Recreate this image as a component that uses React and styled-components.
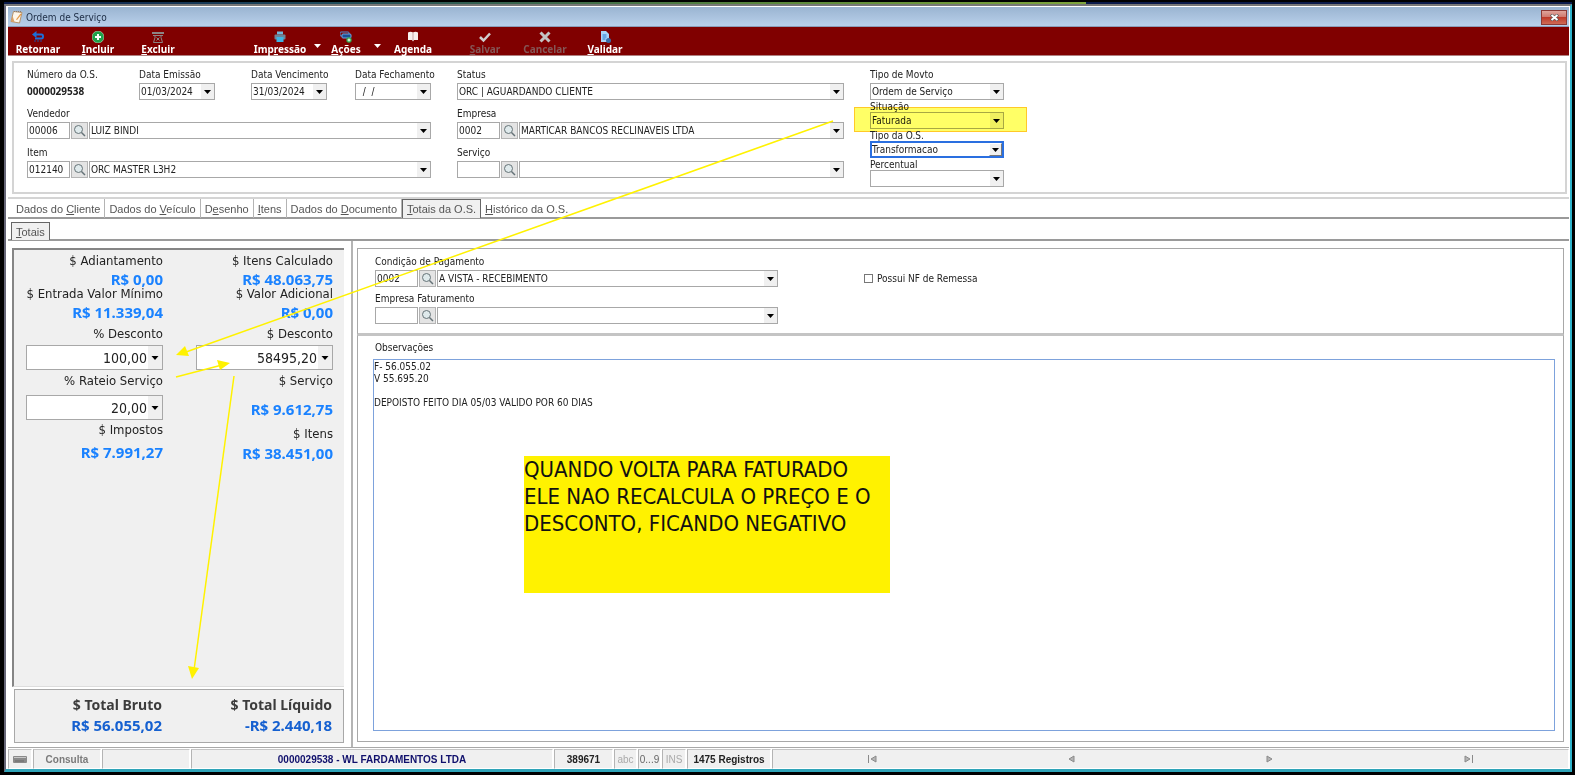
import { useState } from "react";
import styled, { createGlobalStyle, css } from "styled-components";

const UI_FONT = `"DejaVu Sans Condensed", "Noto Sans", sans-serif`;
const BOLD_FONT = `"Noto Sans", "Open Sans", sans-serif`;
const SYS_FONT = `"Liberation Sans", Arial, sans-serif`;

const GlobalStyle = createGlobalStyle`
  * {
    box-sizing: border-box;
  }
  body {
    margin: 0;
    background: #000;
    color: #222;
    font-family: ${UI_FONT};
    font-size: 10px;
  }
  button, input, select, textarea {
    font: inherit;
    color: inherit;
    margin: 0;
    border-radius: 0;
  }
`;

//Desktop and window frame
const Desktop = styled.div`
  position: relative;
  display: flex;
  flex-direction: column;
  min-height: 100vh;
  padding: 2px 3px 3px 4px;
  background: #000;
`;

const TopStrip = styled.div`
  height: 2px;
  background: linear-gradient(90deg, #0a1a4a 0%, #1d4a5c 20%, #5c8a3a 50%, #7fa63c 69%, #0a1a4a 69%, #0a1a4a 100%);
`;

const Window = styled.div`
  flex: 1;
  display: flex;
  flex-direction: column;
  background: #fff;
  border-style: solid;
  border-width: 2px 2px 3px 2px;
  border-color: #777 #2fb4cc #2fa4b8 #667;
  padding: 1px 1px 0 2px;
`;

const TitleBar = styled.header`
  display: flex;
  align-items: center;
  gap: 3px;
  height: 20px;
  padding: 1px 2px 0;
  background: linear-gradient(#9ab4d1, #b9d0ea);
  border-bottom: 1px solid #8c9cb8;
`;

const Title = styled.h1`
  flex: 1;
  margin: 0;
  font-size: 10px;
  font-weight: normal;
  color: #1c2c44;
`;

const CloseButton = styled.button`
  display: flex;
  align-items: center;
  justify-content: center;
  width: 26px;
  height: 15px;
  padding: 0;
  border: 1px solid #8c3a36;
  background: linear-gradient(#e0a59c 0%, #d07a70 45%, #bf3a2a 50%, #cf6a55 100%);
`;

//Red toolbar
const Toolbar = styled.nav`
  display: flex;
  height: 29px;
  background: #800000;
  border-bottom: 1px solid #b08080;
`;

const ToolButton = styled.button`
  display: flex;
  flex-direction: column;
  align-items: center;
  width: ${(p) => p.$width || 60}px;
  margin-left: ${(p) => p.$space || 0}px;
  padding: 4px 0 0;
  border: none;
  background: none;
  color: ${(p) => (p.disabled ? "#855656" : "#fff")};
  font-family: ${BOLD_FONT};
  font-weight: bold;
  font-size: 10px;
  line-height: 12px;

  svg {
    flex: none;
    display: block;
  }
`;

const ToolArrow = styled.button`
  display: flex;
  align-items: center;
  justify-content: center;
  width: ${(p) => p.$width}px;
  padding: 10px 0 0;
  border: none;
  background: none;
  color: #fff;
`;

//Form parts
const HeaderPanel = styled.section`
  display: grid;
  grid-template-columns: minmax(0, 404px) minmax(0, 387px) minmax(0, 134px);
  gap: 26px;
  align-items: start;
  margin: 5px 2px 3px 4px;
  padding: 4px 13px 5px;
  border: 2px solid #d4d4d4;
`;

const Column = styled.div`
  display: flex;
  flex-direction: column;
  gap: ${(p) => p.$gap || 0}px;
`;

const DateRow = styled.div`
  display: grid;
  grid-template-columns: 112px 112px 104px 76px;
`;

const Field = styled.div`
  position: relative;
  display: flex;
  flex-direction: column;
`;

const DateBox = styled(Field)`
  width: 76px;
`;

const Label = styled.label`
  padding-top: ${(p) => (p.$tight ? 2 : 0)}px;
  font-size: 10px;
  line-height: ${(p) => (p.$tight ? 10 : 16)}px;
  white-space: nowrap;
`;

const OrderNumber = styled.output`
  font-family: ${BOLD_FONT};
  font-size: 10px;
  font-weight: bold;
  line-height: 17px;
`;

const boxed = css`
  width: 100%;
  height: 17px;
  padding: 0 1px;
  border: 1px solid #a8a8a8;
  background: #fff;
  outline: none;
  font-size: 10px;
`;

const TextInput = styled.input`
  ${boxed}
`;

const ComboBox = styled.div`
  display: grid;
  width: 100%;
  min-width: 0;

  > * {
    grid-area: 1 / 1;
  }

  select, input {
    ${boxed}
    appearance: none;
    padding-right: 16px;
  }

  ${(p) =>
    p.$focused &&
    css`
      select {
        border: 2px solid #2a6fe0;
        padding-left: 0;
      }
    `}
`;

const ComboArrow = styled.span`
  display: flex;
  align-items: center;
  justify-content: center;
  justify-self: end;
  width: 13px;
  margin: ${(p) => (p.$raised ? 2 : 1)}px;
  background: #f0f0f0;
  color: #000;
  pointer-events: none;
  ${(p) =>
    p.$raised &&
    css`
      border: 1px solid;
      border-color: #fff #777 #777 #fff;
    `}
`;

const LookupRow = styled.div`
  display: grid;
  grid-template-columns: 43px 17px minmax(0, 1fr);
  column-gap: 1px;
`;

const SearchButton = styled.button`
  display: flex;
  align-items: center;
  justify-content: center;
  padding: 0;
  border: 1px solid #b4b4b4;
  background: #e4e4e4;
  color: #667378;
`;

const Highlight = styled.div`
  position: absolute;
  inset: -5px -23px -3px -16px;
  border: 1px solid #ffc928;
  background: #ffff66;
  mix-blend-mode: multiply;
  pointer-events: none;
`;

//Tabs
const TabBar = styled.div`
  display: flex;
  align-items: stretch;
  height: 22px;
  padding: ${(p) => (p.$sub ? "3px 0 0 3px" : 0)};
  border-top: ${(p) => (p.$sub ? "none" : "2px solid #d4d4d4")};
  border-bottom: 2px solid #9a9a9a;
`;

const Tab = styled.button`
  margin: 0;
  margin-bottom: -1px;
  padding: 0 4px;
  border: none;
  border-right: 1px solid #b4b4b4;
  background: none;
  color: #555;
  font-family: ${SYS_FONT};
  font-size: 11px;
  white-space: nowrap;

  &:first-child {
    padding-left: 8px;
  }
  &:last-child {
    border-right-color: transparent;
  }
  ${(p) =>
    p.$active &&
    css`
      &&,
      &&:last-child {
        padding-left: 4px;
        border: 1px solid #666;
        border-bottom: none;
        background: #f0f0f0;
      }
    `}
`;

//Main area
const Content = styled.main`
  flex: 1;
  display: flex;
`;

const LeftPane = styled.aside`
  display: flex;
  flex-direction: column;
  gap: 2px;
  width: 345px;
  padding: 7px 7px 4px 4px;
  border-right: 2px solid #b4b4b4;
`;

const ValuesPanel = styled.section`
  flex: 1;
  display: grid;
  grid-template-columns: 137px 137px;
  column-gap: 33px;
  padding: 4px 9px 0 12px;
  background: #f0f0f0;
  border: 2px solid #858585;
  border-right: none;
  border-bottom: 1px solid #ddd;
`;

const TotalsPanel = styled.section`
  display: grid;
  grid-template-columns: 137px 137px;
  column-gap: 33px;
  padding: 5px 11px 7px 10px;
  margin-left: 2px;
  background: #f0f0f0;
  border: 1px solid #a8a8a8;
`;

const Amount = styled.div`
  display: flex;
  flex-direction: column;
  align-items: stretch;
  gap: ${(p) => p.$gap || 4}px;
  margin-top: ${(p) => p.$space || 0}px;
  text-align: right;
  white-space: nowrap;
`;

const AmountLabel = styled.label`
  font-size: 13px;
  line-height: 14px;
  color: #222;
`;

const AmountValue = styled.output`
  font-family: ${BOLD_FONT};
  font-size: 15px;
  font-weight: bold;
  line-height: 16px;
  color: #1a82ff;
`;

const AmountBox = styled.div`
  display: flex;
  height: 25px;
  border: 1px solid #a8a8a8;
  background: #fff;

  input {
    flex: 1;
    min-width: 0;
    padding: 0 1px;
    border: none;
    outline: none;
    background: none;
    font-size: 14px;
    text-align: right;
  }
  button {
    display: flex;
    align-items: center;
    justify-content: center;
    width: 14px;
    padding: 0;
    border: none;
    background: #f0f0f0;
    color: #000;
  }
`;

const TotalItem = styled.div`
  display: flex;
  flex-direction: column;
  text-align: right;
`;

const TotalLabel = styled.span`
  font-family: ${BOLD_FONT};
  font-size: 14px;
  font-weight: bold;
  line-height: 20px;
  color: #3c3c3c;
`;

const TotalValue = styled.output`
  font-family: ${BOLD_FONT};
  font-size: 15px;
  font-weight: bold;
  line-height: 20px;
  color: #1560d0;
`;

const RightPane = styled.div`
  flex: 1;
  display: flex;
  flex-direction: column;
  padding: 7px 5px 5px 4px;
`;

const PaymentPanel = styled.section`
  display: grid;
  grid-template-columns: minmax(0, 403px) auto;
  justify-content: start;
  column-gap: 86px;
  align-items: start;
  padding: 5px 17px 9px;
  border: 1px solid #a8a8a8;
  border-bottom: 2px solid #c4c4c4;
`;

const CheckLabel = styled.label`
  display: flex;
  align-items: center;
  gap: 4px;
  margin-top: 16px;
  line-height: 17px;

  input {
    appearance: none;
    width: 9px;
    height: 9px;
    border: 1px solid #777;
    background: #fff;
  }
`;

const NotesPanel = styled.section`
  position: relative;
  flex: 1;
  display: flex;
  flex-direction: column;
  padding: 4px 8px 10px 15px;
  border: 1px solid #a8a8a8;
  border-top: 1px solid #c4c4c4;

  label {
    padding: 0 0 3px 2px;
  }
`;

const NotesArea = styled.textarea`
  flex: 1;
  display: block;
  width: 100%;
  padding: 1px 0;
  border: 1px solid #7da2dc;
  outline: none;
  resize: none;
  font-size: 10px;
  line-height: 12px;
`;

const StickyNote = styled.p`
  position: absolute;
  left: 166px;
  top: 120px;
  width: 366px;
  height: 137px;
  margin: 0;
  background: #fff200;
  color: #111;
  font-size: 22px;
  line-height: 27px;
`;

//Status bar
const StatusBar = styled.footer`
  display: grid;
  grid-template-columns: 24px 68px 88px 362px 59px 23px 23px 24px 84px 1fr;
  column-gap: 1px;
  height: 22px;
  padding-top: 1px;
  background: #fff;
  border-top: 1px solid #a8a8a8;
  font-family: ${SYS_FONT};
`;

const StatusCell = styled.div`
  display: flex;
  align-items: center;
  justify-content: center;
  border: 1px solid;
  border-color: #c4c4c4 #fff #fff #b4b4b4;
  background: #f0f0f0;
  color: ${(p) => p.$color || "#222"};
  font-size: 10px;
  font-weight: ${(p) => (p.$plain ? "normal" : "bold")};
  white-space: nowrap;
`;

const NavCell = styled(StatusCell)`
  justify-content: space-around;
`;

const NavButton = styled.button`
  display: flex;
  padding: 0;
  border: none;
  background: none;
  color: #8a8a8a;
`;

const Arrows = styled.svg`
  position: absolute;
  top: 0;
  left: 0;
  pointer-events: none;
`;

//Icons
const Caret = ({ size = 7 }) => (
  <svg width={size} height="4" viewBox="0 0 7 4">
    <path d="M0 0h7L3.500 4z" fill="currentColor" />
  </svg>
);

const Magnifier = () => (
  <svg width="13" height="13" viewBox="0 0 13 13" fill="none" stroke="currentColor">
    <circle cx="5.500" cy="5.500" r="4" fill="#dfeaec" />
    <path d="M8.500 8.500l3.500 3.500" strokeWidth="1.500" />
  </svg>
);

const OrderIcon = () => (
  <svg width="13" height="14" viewBox="0 0 13 14">
    <path d="M3.500 1.500l8.500 1-2.500 10.500L1 11.500z" fill="#fdf6ea" stroke="#b8946a" />
    <path d="M1 11.500l1.500-6 2 6.500z" fill="#d9a066" />
    <path d="M6 9.500l4.500-6 1 1L7 10z" fill="#e59a4a" />
    <path d="M4 1.500h7" stroke="#8a7a70" strokeDasharray="1 1" />
  </svg>
);

const icons = {
  back: (
    <>
      <path d="M2 3.500h7.500q1.500 0 1.500 2t-1.500 2H3" fill="none" stroke="#1c6fd8" strokeWidth="2" />
      <path d="M4.500 0v7L0 3.500z" fill="#1c6fd8" />
      <path d="M2 10h8" stroke="#1f4fa0" strokeDasharray="2 1" />
    </>
  ),
  add: (
    <>
      <circle cx="6" cy="6" r="6" fill="#1fa34a" stroke="#d8efdc" strokeWidth="0.500" />
      <path d="M6 3v6M3 6h6" stroke="#fff" strokeWidth="2" />
    </>
  ),
  trash: (
    <>
      <path d="M0 2h12" stroke="#8c8484" strokeWidth="2" />
      <path d="M1 4.500h10" stroke="#8c8484" />
      <path d="M3 4.500v2l-1.500 5h9L9 6.500v-2M4.500 6.500l3 3M7.500 6.500l-3 3" fill="none" stroke="#8c8484" />
    </>
  ),
  print: (
    <>
      <rect x="3" y="0.500" width="6" height="3" fill="#6fb8dc" />
      <rect x="0.500" y="3.500" width="11" height="5" rx="1" fill="#6e8496" />
      <rect x="2.500" y="6" width="7" height="5" fill="#3fb4e4" />
    </>
  ),
  actions: (
    <>
      <rect x="0" y="1" width="9" height="4" rx="1" fill="none" stroke="#4a90d8" />
      <rect x="2" y="3" width="9" height="4" rx="1" fill="#1a4f94" stroke="#6aa8e4" />
      <circle cx="9" cy="9" r="2.700" fill="#2fa84f" />
      <path d="M9 7.500v3M7.500 9h3" stroke="#fff" />
    </>
  ),
  book: (
    <>
      <path d="M1 1.500q2.500-1.500 5 0 2.500-1.500 5 0V9H7L6 10.500 5 9H1z" fill="#f8f0ee" />
      <path d="M6 1.500V9" stroke="#c8a8a8" />
    </>
  ),
  check: <path d="M1 6l3.500 3.500L11 2.500" fill="none" stroke="#d0d0d0" strokeWidth="2.500" />,
  cancel: <path d="M1.500 1.500l9 9M10.500 1.500l-9 9" stroke="#c4c4c4" strokeWidth="3" />,
  validate: (
    <>
      <path d="M2 0h5l3 3v8H2z" fill="#a8d4f8" />
      <path d="M3.500 4h4M3.500 6h4M3.500 8h3" stroke="#2878d0" />
      <circle cx="9.500" cy="9.500" r="2.500" fill="#3a6ea8" />
    </>
  ),
};

const ToolIcon = ({ name }) => (
  <svg width="12" height="12" viewBox="0 0 12 12">
    {icons[name]}
  </svg>
);

const navShapes = {
  first: "M1.500 0v8M9 1v6L4 4z",
  prev: "M8 1v6L3 4z",
  next: "M2 1v6l5-3z",
  last: "M1 1v6l5-3zM8.500 0v8",
};

function Combo({ id, value, focused, label }) {
  return (
    <ComboBox $focused={focused}>
      <select id={id} aria-label={label} defaultValue={value}>
        <option>{value}</option>
      </select>
      <ComboArrow $raised={focused}>
        <Caret />
      </ComboArrow>
    </ComboBox>
  );
}

function DateField({ id, label, value }) {
  return (
    <DateBox>
      <Label htmlFor={id}>{label}</Label>
      <ComboBox>
        <input id={id} type="text" defaultValue={value} />
        <ComboArrow>
          <Caret />
        </ComboArrow>
      </ComboBox>
    </DateBox>
  );
}

function LookupField({ id, label, code, value }) {
  return (
    <Field>
      <Label htmlFor={id}>{label}</Label>
      <LookupRow>
        <TextInput id={id} defaultValue={code} />
        <SearchButton type="button" aria-label={`Pesquisar ${label}`}>
          <Magnifier />
        </SearchButton>
        <Combo value={value} label={label} />
      </LookupRow>
    </Field>
  );
}

function MoneyItem({ id, label, value, editable, gap, space }) {
  return (
    <Amount $gap={gap} $space={space}>
      <AmountLabel htmlFor={id}>{label}</AmountLabel>
      {editable ? (
        <AmountBox>
          <input id={id} defaultValue={value} />
          <button type="button" aria-label={`Calcular ${label}`}>
            <Caret size={8} />
          </button>
        </AmountBox>
      ) : (
        <AmountValue id={id}>{value}</AmountValue>
      )}
    </Amount>
  );
}

const leftValues = [
  { id: "adiantamento", label: "$ Adiantamento", value: "R$ 0,00", gap: 3 },
  { id: "entrada", label: "$ Entrada Valor Mínimo", value: "R$ 11.339,04", gap: 3 },
  { id: "pdesc", label: "% Desconto", value: "100,00", editable: true, space: 7 },
  { id: "rateio", label: "% Rateio Serviço", value: "20,00", editable: true, gap: 7, space: 4 },
  { id: "impostos", label: "$ Impostos", value: "R$ 7.991,27", gap: 7, space: 3 },
];

const rightValues = [
  { id: "itenscalc", label: "$ Itens Calculado", value: "R$ 48.063,75", gap: 3 },
  { id: "adicional", label: "$ Valor Adicional", value: "R$ 0,00", gap: 3 },
  { id: "vdesc", label: "$ Desconto", value: "58495,20", editable: true, space: 7 },
  { id: "servicoval", label: "$ Serviço", value: "R$ 9.612,75", gap: 13, space: 4 },
  { id: "itensval", label: "$ Itens", value: "R$ 38.451,00", gap: 4, space: 10 },
];

const tabs = [
  ["Dados do ", "C", "liente"],
  ["Dados do ", "V", "eículo"],
  ["D", "e", "senho"],
  ["", "I", "tens"],
  ["Dados do ", "D", "ocumento"],
  ["", "T", "otais da O.S."],
  ["", "H", "istórico da O.S."],
];

const observacoes = `F- 56.055.02
V 55.695.20

DEPOISTO FEITO DIA 05/03 VALIDO POR 60 DIAS`;

function App() {
  const [activeTab, setActiveTab] = useState(5);

  return (
    <Desktop>
      <GlobalStyle />
      <TopStrip />
      <Window>
        <TitleBar>
          <OrderIcon />
          <Title>Ordem de Serviço</Title>
          <CloseButton type="button" aria-label="Fechar">
            <svg width="9" height="7" viewBox="0 0 9 7">
              <path d="M1 0.500l7 6M8 0.500l-7 6" stroke="#555" strokeWidth="3" />
              <path d="M1.500 1l6 5M7.500 1l-6 5" stroke="#fff" strokeWidth="2" />
            </svg>
          </CloseButton>
        </TitleBar>

        <Toolbar>
          <ToolButton><ToolIcon name="back" /><span>Retornar</span></ToolButton>
          <ToolButton><ToolIcon name="add" /><span><u>I</u>ncluir</span></ToolButton>
          <ToolButton><ToolIcon name="trash" /><span><u>E</u>xcluir</span></ToolButton>
          <ToolButton $space={62}><ToolIcon name="print" /><span>Imp<u>r</u>essão</span></ToolButton>
          <ToolArrow $width={14} aria-label="Opções de impressão"><Caret /></ToolArrow>
          <ToolButton $width={44}><ToolIcon name="actions" /><span><u>A</u>ções</span></ToolButton>
          <ToolArrow $width={18} aria-label="Mais ações"><Caret /></ToolArrow>
          <ToolButton $width={54}><ToolIcon name="book" /><span>Agenda</span></ToolButton>
          <ToolButton $space={15} disabled><ToolIcon name="check" /><span><u>S</u>alvar</span></ToolButton>
          <ToolButton disabled><ToolIcon name="cancel" /><span>Cancelar</span></ToolButton>
          <ToolButton><ToolIcon name="validate" /><span><u>V</u>alidar</span></ToolButton>
        </Toolbar>

        <HeaderPanel>
          <Column $gap={6}>
            <DateRow>
              <Field>
                <Label htmlFor="numero">Número da O.S.</Label>
                <OrderNumber id="numero">0000029538</OrderNumber>
              </Field>
              <DateField id="emissao" label="Data Emissão" value="01/03/2024" />
              <DateField id="vencimento" label="Data Vencimento" value="31/03/2024" />
              <DateField id="fechamento" label="Data Fechamento" value="  /  /" />
            </DateRow>
            <LookupField id="vendedor" label="Vendedor" code="00006" value="LUIZ BINDI" />
            <LookupField id="item" label="Item" code="012140" value="ORC MASTER L3H2" />
          </Column>

          <Column $gap={6}>
            <Field>
              <Label htmlFor="status">Status</Label>
              <Combo id="status" value="ORC | AGUARDANDO CLIENTE" />
            </Field>
            <LookupField id="empresa" label="Empresa" code="0002" value="MARTICAR BANCOS RECLINAVEIS LTDA" />
            <LookupField id="servico" label="Serviço" code="" value="" />
          </Column>

          <Column>
            <Field>
              <Label htmlFor="movto">Tipo de Movto</Label>
              <Combo id="movto" value="Ordem de Serviço" />
            </Field>
            <Field>
              <Label $tight htmlFor="situacao">Situação</Label>
              <Field>
                <Combo id="situacao" value="Faturada" />
                <Highlight />
              </Field>
            </Field>
            <Field>
              <Label $tight htmlFor="tipoos">Tipo da O.S.</Label>
              <Combo id="tipoos" value="Transformacao" focused />
            </Field>
            <Field>
              <Label $tight htmlFor="percentual">Percentual</Label>
              <Combo id="percentual" value="" />
            </Field>
          </Column>
        </HeaderPanel>

        <TabBar>
          {tabs.map(([before, key, after], index) => (
            <Tab key={index} type="button" $active={index === activeTab} onClick={() => setActiveTab(index)}>
              {before}<u>{key}</u>{after}
            </Tab>
          ))}
        </TabBar>
        <TabBar $sub>
          <Tab type="button" $active><u>T</u>otais</Tab>
        </TabBar>

        <Content>
          <LeftPane>
            <ValuesPanel>
              <div>
                {leftValues.map((item) => <MoneyItem key={item.id} {...item} />)}
              </div>
              <div>
                {rightValues.map((item) => <MoneyItem key={item.id} {...item} />)}
              </div>
            </ValuesPanel>
            <TotalsPanel>
              <TotalItem>
                <TotalLabel>$ Total Bruto</TotalLabel>
                <TotalValue>R$ 56.055,02</TotalValue>
              </TotalItem>
              <TotalItem>
                <TotalLabel>$ Total Líquido</TotalLabel>
                <TotalValue>-R$ 2.440,18</TotalValue>
              </TotalItem>
            </TotalsPanel>
          </LeftPane>

          <RightPane>
            <PaymentPanel>
              <Column $gap={4}>
                <LookupField id="condicao" label="Condição de Pagamento" code="0002" value="A VISTA - RECEBIMENTO" />
                <LookupField id="faturamento" label="Empresa Faturamento" code="" value="" />
              </Column>
              <CheckLabel>
                <input type="checkbox" />
                Possui NF de Remessa
              </CheckLabel>
            </PaymentPanel>
            <NotesPanel>
              <Label htmlFor="obs">Observações</Label>
              <NotesArea id="obs" defaultValue={observacoes} />
              <StickyNote>
                QUANDO VOLTA PARA FATURADO ELE NAO RECALCULA O PREÇO E O DESCONTO, FICANDO NEGATIVO
              </StickyNote>
            </NotesPanel>
          </RightPane>
        </Content>

        <StatusBar>
          <StatusCell>
            <svg width="14" height="7" viewBox="0 0 14 7">
              <rect width="14" height="7" rx="1" fill="#8a8a8a" />
              <path d="M1 1.500h12" stroke="#c8c8c8" />
              <path d="M2 5h9" stroke="#6a6a6a" />
            </svg>
          </StatusCell>
          <StatusCell $color="#7a7a7a">Consulta</StatusCell>
          <StatusCell />
          <StatusCell $color="#10106c">0000029538 - WL FARDAMENTOS LTDA</StatusCell>
          <StatusCell>389671</StatusCell>
          <StatusCell $plain $color="#aaa">abc</StatusCell>
          <StatusCell $plain $color="#666">0...9</StatusCell>
          <StatusCell $plain $color="#aaa">INS</StatusCell>
          <StatusCell>1475 Registros</StatusCell>
          <NavCell>
            {Object.keys(navShapes).map((name) => (
              <NavButton key={name} type="button" aria-label={name}>
                <svg width="10" height="8" viewBox="0 0 10 8">
                  <path d={navShapes[name]} fill="#b4b4b4" stroke="currentColor" />
                </svg>
              </NavButton>
            ))}
          </NavCell>
        </StatusBar>
      </Window>

      <Arrows width="900" height="700" viewBox="0 0 900 700" stroke="#fff200" strokeWidth="1.500" fill="#fff200">
        <path d="M833 121L186 352" />
        <path d="M176 355l9-9 4 10z" stroke="none" />
        <path d="M176 377l46-12" />
        <path d="M230 363l-13-3 3 10z" stroke="none" />
        <path d="M234 376L194 670" />
        <path d="M192 679l-4-13 11 2z" stroke="none" />
      </Arrows>
    </Desktop>
  );
}

export default App;
